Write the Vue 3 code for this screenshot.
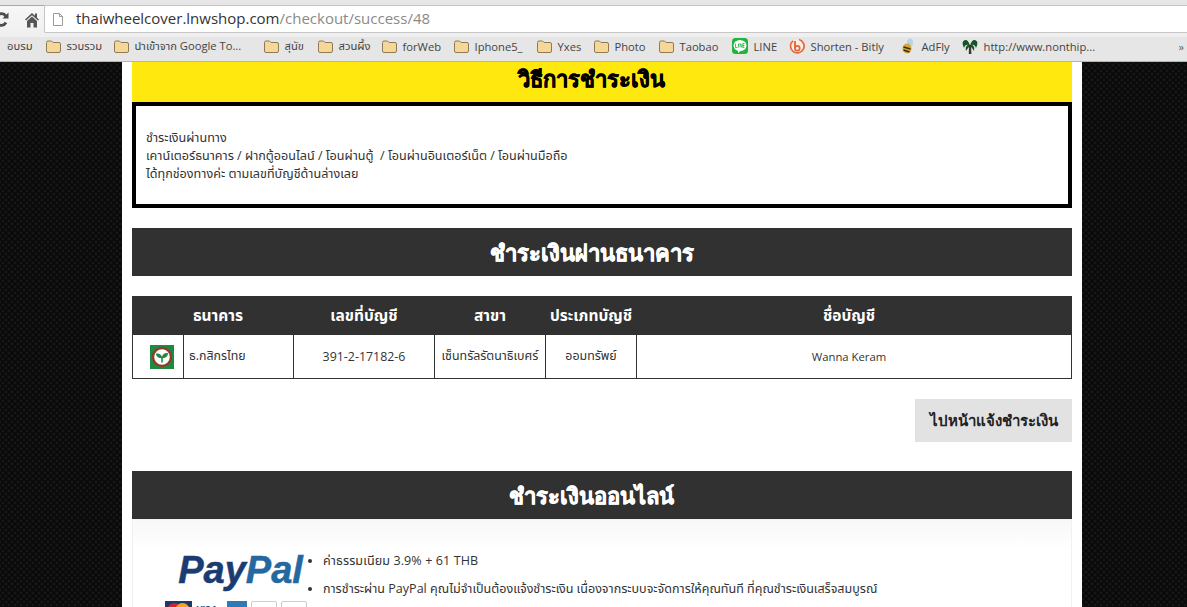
<script setup>
const folders = [
  { label: 'รวบรวม', width: 34 },
  { label: 'นำเข้าจาก Google To...', width: 116 },
  { label: 'สุนัข', width: 20 },
  { label: 'สวนผึ้ง', width: 30 },
  { label: 'forWeb', width: 38 },
  { label: 'Iphone5_', width: 49 },
  { label: 'Yxes', width: 23 },
  { label: 'Photo', width: 31 },
  { label: 'Taobao', width: 39 }
]
const columns = ['ธนาคาร', 'เลขที่บัญชี', 'สาขา', 'ประเภทบัญชี', 'ชื่อบัญชี']
</script>

<template>
  <div class="screen">
    <header class="chrome">
      <div class="tabstrip"></div>
      <div class="toolbar">
        <svg class="reload" width="10" height="16" viewBox="0 0 10 16">
          <path d="M7 4.500A5.500 5.500 0 0 0 -3 5.500M-2 11.500A5.500 5.500 0 0 0 7 10.500" fill="none" stroke="#4d4d4d" stroke-width="2.800" />
          <path d="M3.500 6.500h6v-6z" fill="#4d4d4d" />
        </svg>
        <svg class="home" width="14" height="16" viewBox="0 0 14 16">
          <path d="M7 1L0 7.500l1 1L7 3.200 13 8.500l1-1L12 5.700V1.500h-2v2.300z" fill="#555" />
          <path d="M2 9L7 4.500 12 9V15.500H8.500V11h-3V15.500H2z" fill="#555" />
        </svg>
        <div class="omnibox">
          <svg width="10" height="13" viewBox="0 0 10 13">
            <path d="M.5.500H6.500L9.500 3.500V12.500H.5z M6.500.500V3.500H9.500" fill="#fff" stroke="#9a9a9a" />
          </svg>
          <span class="url"><span class="host">thaiwheelcover.lnwshop.com</span>/checkout/success/48</span>
        </div>
      </div>
      <nav class="bookmarks">
        <span class="bm">อบรม</span>
        <span v-for="f in folders" :key="f.label" class="bm">
          <svg width="15" height="13" viewBox="0 0 15 13">
            <path d="M.5 2.500Q.5 1 2 1H5.500L7 2.500H13Q14.500 2.500 14.500 4V11Q14.500 12.500 13 12.500H2Q.5 12.500 .5 11z" fill="#f6d79a" stroke="#8f7a55" />
          </svg>
          <span class="label" :style="{ width: f.width + 'px' }">{{ f.label }}</span>
        </span>
        <span class="bm">
          <svg width="16" height="16" viewBox="0 0 16 16">
            <rect width="16" height="16" rx="3.500" fill="#1fb53b" />
            <ellipse cx="8" cy="7.500" rx="6.500" ry="5.500" fill="#fff" />
            <path d="M6 12l0 3 3-2.500z" fill="#fff" />
            <path d="M3.500 5.500v4h2M6.500 5.500v4M8 9.500v-4l2 4v-4M12.500 5.500h-1.500v4h1.500M11 7.500h1.500" fill="none" stroke="#1fb53b" stroke-width=".8" />
          </svg>
          <span class="label w-line">LINE</span>
        </span>
        <span class="bm">
          <svg width="16" height="16" viewBox="0 0 16 16">
            <path d="M4 2.800A6.800 6.800 0 1 0 10 1.500" fill="#fbeee6" stroke="#e2683a" stroke-width="1.700" />
            <path d="M6 3V10.500" stroke="#e2683a" stroke-width="1.900" fill="none" />
            <circle cx="8.300" cy="10.300" r="2.400" fill="none" stroke="#e2683a" stroke-width="1.700" />
          </svg>
          <span class="label w-bitly">Shorten - Bitly</span>
        </span>
        <span class="bm">
          <svg width="16" height="16" viewBox="0 0 16 16">
            <ellipse cx="10" cy="4.500" rx="3" ry="4" fill="#b9d3e6" />
            <ellipse cx="7" cy="10.500" rx="4.500" ry="5" fill="#d6a735" />
            <path d="M3.500 9l7 2M3.500 12l6 2" stroke="#3b2f12" stroke-width="1.500" />
          </svg>
          <span class="label w-adfly">AdFly</span>
        </span>
        <span class="bm">
          <svg width="16" height="16" viewBox="0 0 16 16">
            <path d="M8 7.500C6 1 3 1 1 3.500 0 5 1 8 2 10 3 7 5 6 8 7.500zM8 7.500C10 1 13 1 15 3.500 16 5 15 8 14 10 13 7 11 6 8 7.500zM8 7.500C5 6 3 9 4 13 6 10 7 9 8 7.500zM8 7.500C11 6 13 9 12 13 10 10 9 9 8 7.500z" fill="#15532a" />
            <path d="M7 7H9L9.400 16H6.800z" fill="#3a3a2a" />
          </svg>
          http://www.nonthip...
        </span>
        <span class="more">»</span>
      </nav>
    </header>

    <main class="page">
      <div class="column">
        <h2 class="title yellow">วิธีการชำระเงิน</h2>
        <div class="notice">
          <p>ชำระเงินผ่านทาง</p>
          <p>เคาน์เตอร์ธนาคาร / ฝากตู้ออนไลน์ / โอนผ่านตู้ &nbsp;/ โอนผ่านอินเตอร์เน็ต / โอนผ่านมือถือ</p>
          <p>ได้ทุกช่องทางค่ะ ตามเลขที่บัญชีด้านล่างเลย</p>
        </div>

        <h2 class="title dark">ชำระเงินผ่านธนาคาร</h2>

        <table class="banks">
          <colgroup>
            <col class="c1" /><col class="c2" /><col class="c3" /><col class="c4" /><col class="c5" /><col />
          </colgroup>
          <thead>
            <tr>
              <th colspan="2" class="first-head">{{ columns[0] }}</th>
              <th v-for="c in columns.slice(1, 3)" :key="c">{{ c }}</th>
              <th>{{ columns[3] }}</th>
              <th class="last-head">{{ columns[4] }}</th>
            </tr>
          </thead>
          <tbody>
            <tr>
              <td class="logo">
                <svg width="24" height="24" viewBox="0 0 24 24">
                  <rect width="24" height="24" fill="#1c8a41" />
                  <circle cx="12" cy="12" r="9" fill="#fff" stroke="#8f3d2a" stroke-width="2.400" />
                  <path d="M11.200 17.500V13C8 13 6 11 6 8.500 9 8 11.500 9.500 12 12 12.500 9 15 7.500 18 8 18 11 16 13 12.800 13V17.500z" fill="#1c8a41" />
                </svg>
              </td>
              <td class="left">ธ.กสิกรไทย</td>
              <td>391-2-17182-6</td>
              <td>เซ็นทรัลรัตนาธิเบศร์</td>
              <td>ออมทรัพย์</td>
              <td class="latin">Wanna Keram</td>
            </tr>
          </tbody>
        </table>

        <div class="actions"><a class="notify">ไปหน้าแจ้งชำระเงิน</a></div>

        <h2 class="title dark online">ชำระเงินออนไลน์</h2>

        <section class="paypal">
          <div class="brand">
            <div class="pp-logo"><span class="pay">Pay</span><span class="pal">Pal</span></div>
            <div class="cards">
              <svg width="27" height="20" viewBox="0 0 27 20">
                <rect width="27" height="20" fill="#1b3a6b" />
                <circle cx="9.500" cy="9" r="7" fill="#d2232a" />
                <circle cx="17.500" cy="9" r="7" fill="#f6a21c" />
              </svg>
              <span class="visa">VISA</span>
              <span class="amex"></span>
              <span class="blank"></span>
              <span class="blank"></span>
            </div>
          </div>
          <ul>
            <li class="fee">ค่าธรรมเนียม 3.9% + 61 THB</li>
            <li>การชำระผ่าน PayPal คุณไม่จำเป็นต้องแจ้งชำระเงิน เนื่องจากระบบจะจัดการให้คุณทันที ที่คุณชำระเงินเสร็จสมบูรณ์</li>
          </ul>
        </section>
      </div>
    </main>
  </div>
</template>

<style scoped>
.screen {
  width: 1187px;
  height: 607px;
  overflow: hidden;
  display: flex;
  flex-direction: column;
  font-family: "Open Sans", "Noto Sans", "Noto Sans Thai", "DejaVu Sans", sans-serif;
}
.chrome {
  flex: none;
  height: 62px;
  display: flex;
  flex-direction: column;
  background: #f2f2f2;
}
.tabstrip {
  height: 6px;
  background: #e6e6e6;
  border-bottom: 1px solid #a9a9a9;
  box-sizing: border-box;
}
.toolbar {
  height: 31px;
  display: flex;
  align-items: center;
  background: linear-gradient(#f7f7f7, #efefef);
}
.reload { margin-left: -1px; margin-top: -3px; }
.home { margin-left: 16px; margin-top: -3px; }
.omnibox {
  flex: 1;
  height: 26px;
  margin-left: 5px;
  margin-top: -5px;
  display: flex;
  align-items: center;
  gap: 13px;
  padding-left: 8px;
  background: #fff;
  border: 1px solid #c6c6c6;
  border-right: 0;
  border-radius: 2px 0 0 2px;
}
.url {
  font-size: 15px;
  margin-top: -2px;
  color: #8a8a8a;
}
.host { color: #333; }
.bookmarks {
  flex: none;
  height: 25px;
  display: flex;
  align-items: center;
  gap: 13px;
  padding: 0 0 6px 7px;
  background: #e6e6e6;
  border-bottom: 1px solid #b5b5b5;
  box-sizing: border-box;
  font-size: 11.200px;
  color: #444;
  white-space: nowrap;
}
.bm {
  display: inline-flex;
  align-items: center;
  gap: 6px;
}
.label { display: inline-block; }
.w-line { width: 22px; }
.w-bitly { width: 76px; }
.w-adfly { width: 27px; }
.more {
  margin-left: auto;
  margin-right: 3px;
  color: #666;
}
.page {
  flex: 1;
  min-height: 0;
  display: flex;
  background-color: #090909;
  background-image:
    radial-gradient(circle, #171717 0 1px, transparent 2px),
    radial-gradient(circle, #171717 0 1px, transparent 2px);
  background-size: 6px 6px;
  background-position: 0 0, 3px 3px;
}
.column {
  width: 940px;
  padding: 0 10px;
  margin-left: 122px;
  background: #fff;
  overflow: hidden;
}
.title {
  margin: 0;
  padding-right: 21px;
  text-align: center;
  font-family: "Noto Sans", "Open Sans", sans-serif;
  font-weight: 700;
  font-size: 22px;
  line-height: 48px;
  -webkit-text-stroke: 0.5px currentColor;
}
.yellow {
  height: 40px;
  line-height: 33px;
  background: #ffe80d;
  color: #000;
}
.dark {
  height: 48px;
  background: #313131;
  color: #fff;
}
.notice {
  height: 106px;
  box-sizing: border-box;
  margin-bottom: 20px;
  padding: 23px 10px 0;
  border: 4px solid #000;
  font-size: 12.600px;
  line-height: 18px;
  color: #333;
}
.notice p { margin: 0; }
.banks {
  width: 940px;
  margin-top: 20px;
  table-layout: fixed;
  border-collapse: collapse;
  font-size: 12.400px;
  color: #333;
}
.c1 { width: 51px; }
.c2 { width: 110px; }
.c3 { width: 141px; }
.c4 { width: 111px; }
.c5 { width: 91px; }
.banks th {
  height: 37px;
  padding: 0;
  background: #313131;
  border: 1px solid #313131;
  color: #fff;
  font-size: 15.500px;
  font-weight: 700;
}
.banks th.first-head { padding-left: 10px; }
.banks th.last-head { padding-right: 10px; }
.banks td {
  height: 43px;
  padding: 0;
  text-align: center;
  border: 1px solid #333;
}
.banks td.left {
  text-align: left;
  padding-left: 5px;
}
.banks td.latin {
  font-size: 11.300px;
  padding-right: 10px;
}
.banks td.logo { padding-left: 8px; }
.banks td.logo svg { display: block; margin: 0 auto; }
.actions {
  display: flex;
  justify-content: flex-end;
  margin-top: 20px;
}
.notify {
  width: 157px;
  height: 43px;
  display: flex;
  align-items: center;
  justify-content: center;
  background: #e2e2e2;
  color: #222;
  font-family: "Noto Sans", "Open Sans", sans-serif;
  font-size: 15px;
  font-weight: 700;
}
.online { margin-top: 29px; }
.paypal {
  height: 120px;
  box-sizing: border-box;
  border: 1px solid #f1f1f1;
  display: flex;
  background: linear-gradient(#f8f8f8, #fff 30px);
  font-size: 12.550px;
  color: #333;
}
.brand {
  width: 145px;
  margin-left: 32px;
  padding-top: 28px;
  flex: none;
}
.pp-logo {
  text-align: center;
  padding-left: 6px;
  font-family: "Liberation Sans", Arial, sans-serif;
  font-style: italic;
  font-weight: 700;
  font-size: 38px;
  line-height: 44px;
  -webkit-text-stroke: 0.5px currentColor;
  white-space: nowrap;
}
.pay { color: #1a3c72; }
.pal { color: #24689f; }
.cards {
  display: flex;
  gap: 4px;
  margin-top: 9px;
  align-items: flex-start;
}
.visa {
  width: 27px;
  font: italic 700 9px "Liberation Sans", sans-serif;
  color: #1a3c72;
  padding-top: 3px;
}
.amex { width: 20px; height: 20px; background: #2c7bb8; }
.blank {
  width: 26px;
  height: 20px;
  box-sizing: border-box;
  border: 1px solid #ccc;
  border-radius: 2px;
  background: #fff;
}
.paypal ul {
  margin: 0;
  padding: 32px 0 0 13px;
  list-style: disc;
}
.paypal li {
  line-height: 18px;
  margin-bottom: 10px;
  white-space: nowrap;
}
.paypal li.fee { letter-spacing: 0.1px; }
</style>
